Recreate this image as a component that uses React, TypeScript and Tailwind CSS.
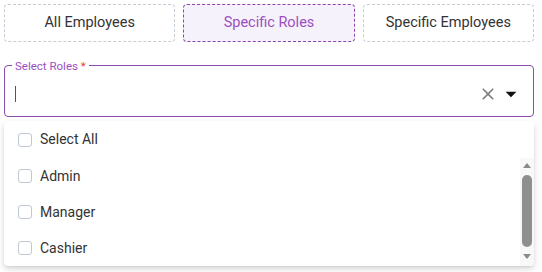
import { useState } from "react";

const modes = ["All Employees", "Specific Roles", "Specific Employees"];
const roles = ["Admin", "Manager", "Cashier"];

function CheckBox() {
  return <span className="h-[14px] w-[14px] shrink-0 rounded-[3px] border border-[#bfc7d2] bg-white" />;
}

export default function App() {
  const [mode, setMode] = useState("Specific Roles");

  return (
    <div className="h-[272px] w-[542px] overflow-hidden bg-white font-['Roboto',sans-serif] text-[#333]">
      <div className="grid grid-cols-3 gap-2 pl-1 pr-2 pt-1">
        {modes.map((m) => (
          <button
            key={m}
            onClick={() => setMode(m)}
            className={
              m === mode
                ? "h-[38px] rounded-[4px] border border-dashed border-[#8e44ad] bg-[#f6f2fb] text-[14.5px] text-[#9b4fc0]"
                : "h-[38px] rounded-[4px] border border-dashed border-[#c4ccd6] bg-white text-[14.5px] text-[#333]"
            }
          >
            {m}
          </button>
        ))}
      </div>

      <div className="pl-1 pr-2">
        <div className="relative mt-[23px] flex h-[52px] items-center rounded-[4px] border border-[#8a4bac] pl-[10px] pr-[9px] pt-[5px]">
          <span className="absolute -top-[8px] left-[7px] bg-white px-[3px] text-[11.5px] text-[#9b4fc0]">
            Select Roles <span className="text-[#e53935]">*</span>
          </span>
          <span className="h-[16px] w-px bg-[#6e3d8c]" />
          <div className="ml-auto flex items-center">
            <svg width="20" height="20" viewBox="0 0 24 24" fill="#808080">
              <path d="M19 6.41 17.59 5 12 10.59 6.41 5 5 6.41 10.59 12 5 17.59 6.41 19 12 13.41 17.59 19 19 17.59 13.41 12z" />
            </svg>
            <svg width="26" height="26" viewBox="0 0 24 24" fill="#111">
              <path d="M7 10l5 5 5-5z" />
            </svg>
          </div>
        </div>

        <div className="mt-[4px] overflow-hidden rounded-[4px] bg-white shadow-[0_3px_6px_rgba(0,0,0,0.16),0_1px_2px_rgba(0,0,0,0.06)]">
          <div className="flex h-[37px] items-center gap-[8px] pl-[14px] text-[14px]">
            <CheckBox />
            <span>Select All</span>
          </div>
          <div className="flex">
            <div className="flex-1">
              {roles.map((r) => (
                <div key={r} className="flex h-[36px] items-center gap-[8px] pl-[14px] text-[14px]">
                  <CheckBox />
                  <span>{r}</span>
                </div>
              ))}
            </div>
            <div className="flex w-[14px] flex-col items-center bg-[#f8f8f8] pt-[5px]">
              <svg width="8" height="5" viewBox="0 0 8 5" fill="#8a8a8a">
                <path d="M4 0 8 5H0z" />
              </svg>
              <div className="mt-[7px] h-[72px] w-[10px] rounded-full bg-[#8f8f8f]" />
              <svg className="mt-[7px]" width="8" height="5" viewBox="0 0 8 5" fill="#8a8a8a">
                <path d="M0 0h8L4 5z" />
              </svg>
            </div>
          </div>
        </div>
      </div>
    </div>
  );
}
